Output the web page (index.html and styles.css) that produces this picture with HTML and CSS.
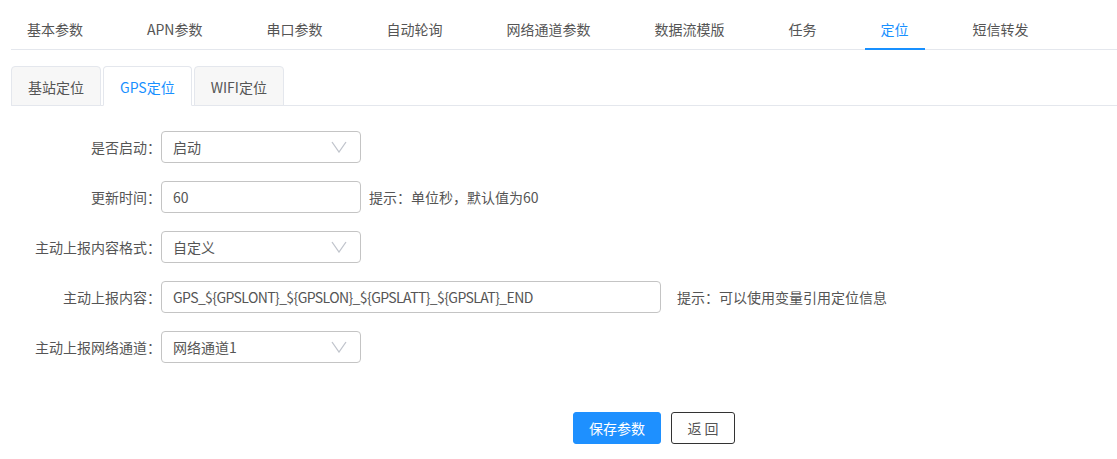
FILE: index.html
```html
<!DOCTYPE html>
<html lang="zh-CN">
<head>
<meta charset="utf-8">
<title>定位</title>
<link rel="stylesheet" href="styles.css">
</head>
<body>
<div class="page">
  <div class="top-tabs">
    <div class="top-tab">基本参数</div>
    <div class="top-tab">APN参数</div>
    <div class="top-tab">串口参数</div>
    <div class="top-tab">自动轮询</div>
    <div class="top-tab">网络通道参数</div>
    <div class="top-tab">数据流模版</div>
    <div class="top-tab">任务</div>
    <div class="top-tab active">定位</div>
    <div class="top-tab">短信转发</div>
  </div>

  <div class="sub-tabs">
    <div class="sub-tab">基站定位</div>
    <div class="sub-tab active">GPS定位</div>
    <div class="sub-tab">WIFI定位</div>
  </div>

  <div class="form">
    <div class="row">
      <div class="label">是否启动：</div>
      <div class="select"><span>启动</span><svg class="arrow" width="16" height="12" viewBox="0 0 16 12"><path d="M1 1 L8 11 L15 1" fill="none" stroke="#c0c4cc" stroke-width="1.3"/></svg></div>
    </div>
    <div class="row">
      <div class="label">更新时间：</div>
      <div class="input">60</div>
      <div class="hint">提示：单位秒，默认值为60</div>
    </div>
    <div class="row">
      <div class="label">主动上报内容格式：</div>
      <div class="select"><span>自定义</span><svg class="arrow" width="16" height="12" viewBox="0 0 16 12"><path d="M1 1 L8 11 L15 1" fill="none" stroke="#c0c4cc" stroke-width="1.3"/></svg></div>
    </div>
    <div class="row">
      <div class="label">主动上报内容：</div>
      <div class="input wide">GPS_${GPSLONT}_${GPSLON}_${GPSLATT}_${GPSLAT}_END</div>
      <div class="hint hint-wide">提示：可以使用变量引用定位信息</div>
    </div>
    <div class="row">
      <div class="label">主动上报网络通道：</div>
      <div class="select"><span>网络通道1</span><svg class="arrow" width="16" height="12" viewBox="0 0 16 12"><path d="M1 1 L8 11 L15 1" fill="none" stroke="#c0c4cc" stroke-width="1.3"/></svg></div>
    </div>
  </div>

  <div class="actions">
    <button class="btn btn-primary">保存参数</button>
    <button class="btn btn-plain">返 回</button>
  </div>
</div>
</body>
</html>
```

FILE: styles.css
```css
* { box-sizing: border-box; }
html, body { margin: 0; padding: 0; background: #fff; }
body {
  font-family: "Noto Sans CJK SC", "Noto Sans", sans-serif;
  font-size: 14px;
  color: #555;
}
.page { width: 1117px; }

.top-tabs {
  display: flex;
  margin-left: 11px;
  padding-top: 10px;
  border-bottom: 1px solid #e4e7ed;
}
.top-tab {
  height: 40px;
  line-height: 38px;
  padding: 0 16px;
  margin-right: 32px;
  margin-bottom: -1px;
  border-bottom: 2px solid transparent;
  color: #555;
  white-space: nowrap;
}
.top-tab.active {
  color: #1890ff;
  border-bottom-color: #1890ff;
}

.sub-tabs {
  display: flex;
  gap: 2px;
  margin: 16px 0 0 11px;
  border-bottom: 1px solid #e4e7ed;
}
.sub-tab {
  height: 40px;
  line-height: 38px;
  padding: 1px 16px 0;
  margin-bottom: -1px;
  border: 1px solid #e4e7ed;
  border-radius: 4px 4px 0 0;
  background: #f7f7f7;
  color: #555;
  white-space: nowrap;
}
.sub-tab.active {
  background: #fff;
  border-bottom-color: #fff;
  color: #1890ff;
}

.form { margin-top: 25px; padding-bottom: 1px; }
.row {
  display: flex;
  align-items: center;
  height: 32px;
  margin-bottom: 18px;
}
.label {
  width: 161px;
  flex-shrink: 0;
  text-align: right;
  color: #555;
  white-space: nowrap;
}
.select, .input {
  width: 200px;
  height: 32px;
  border: 1px solid #c4c4c4;
  border-radius: 4px;
  padding: 0 11px;
  display: flex;
  align-items: center;
  color: #555;
  white-space: nowrap;
}
.select { justify-content: space-between; padding-right: 13px; }
.arrow { display: block; }
.input.wide { width: 500px; letter-spacing: -0.6px; }
.hint {
  margin-left: 8px;
  color: #555;
  white-space: nowrap;
}
.hint.hint-wide { margin-left: 16px; }

.actions {
  display: flex;
  gap: 10px;
  padding-left: 573px;
  margin-top: 30px;
}
.btn {
  height: 32px;
  border-radius: 3px;
  font-family: inherit;
  font-size: 14px;
  padding: 0;
  cursor: pointer;
}
.btn-primary {
  width: 88px;
  background: #1e90ff;
  border: 1px solid #1e90ff;
  color: #fff;
}
.btn-plain {
  width: 64px;
  background: #fff;
  border: 1px solid #333;
  color: #555;
}
```
